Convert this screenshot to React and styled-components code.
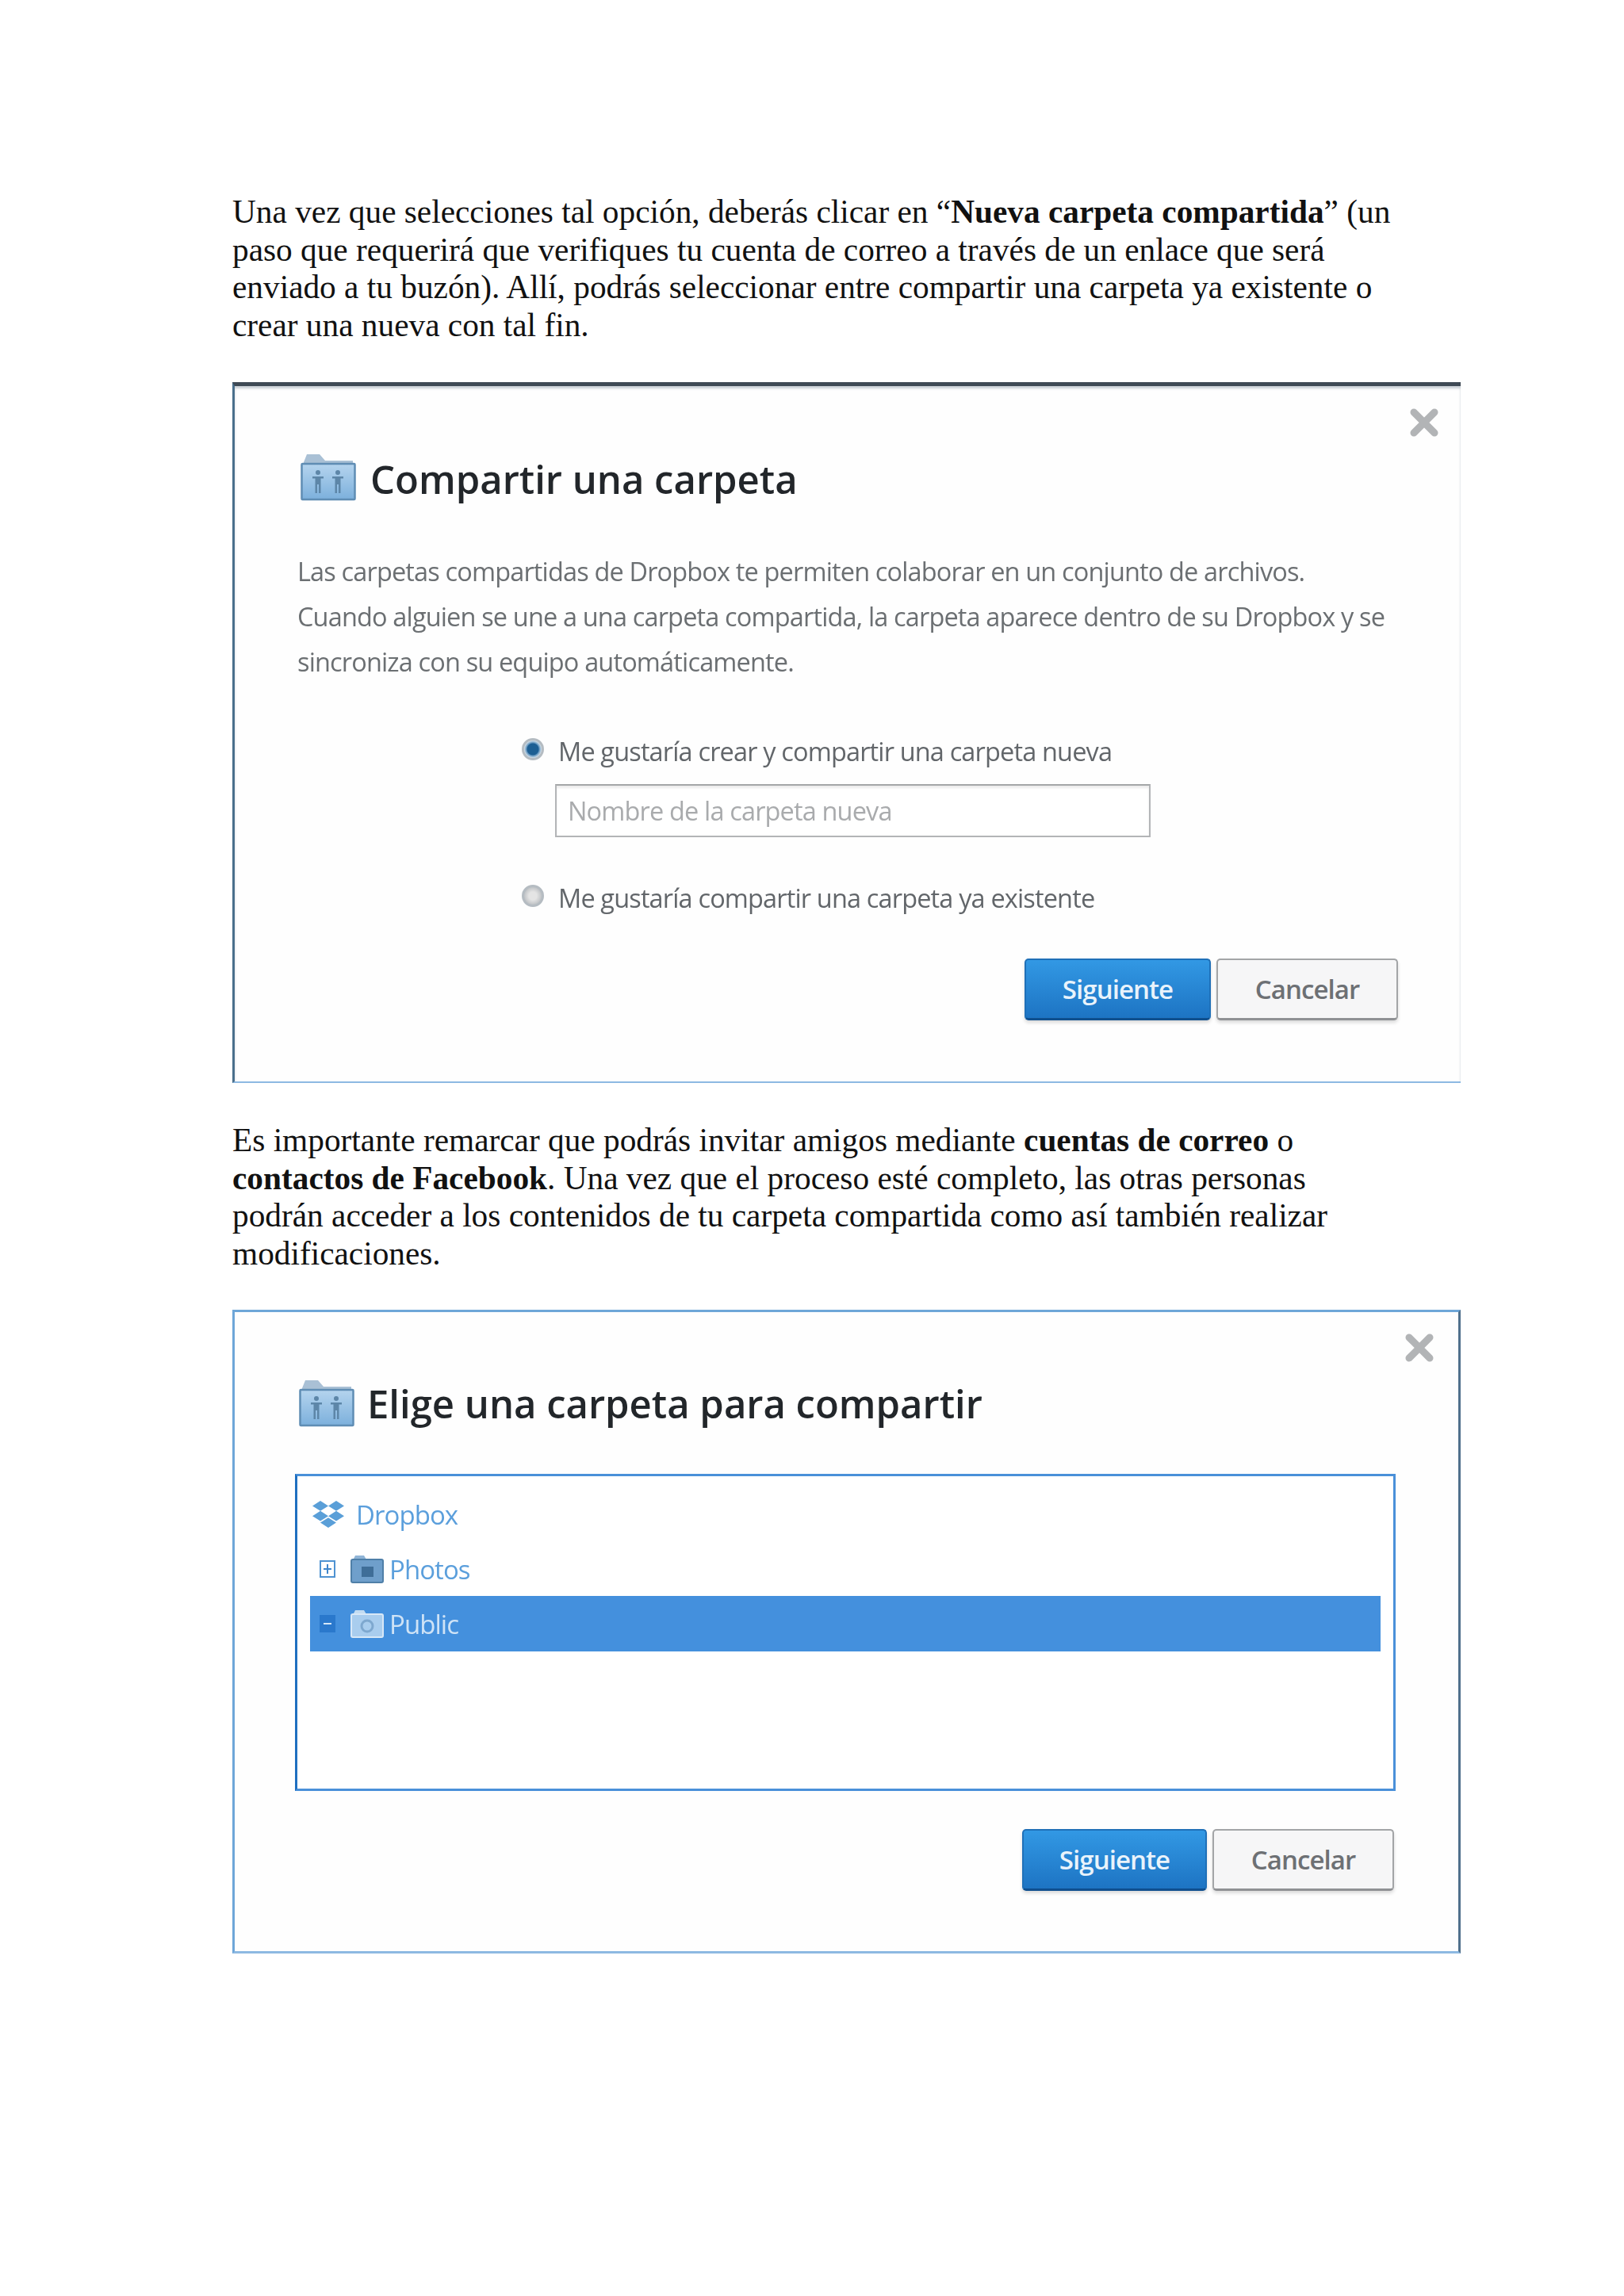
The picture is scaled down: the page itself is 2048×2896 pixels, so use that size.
import React from 'react';
import styled, { createGlobalStyle } from 'styled-components';
import { FaDropbox } from 'react-icons/fa';

const Global = createGlobalStyle`
  html, body { margin: 0; padding: 0; background: #fff; }
`;

const Page = styled.main`
  width: 2048px;
  min-height: 2896px;
  box-sizing: border-box;
  padding: 244px 206px 0 293px;
  background: #fff;
`;

const Para = styled.p`
  margin: 0 0 ${p => p.$after}px;
  font-family: "Liberation Serif", "Times New Roman", serif;
  font-size: 41.32px;
  line-height: 47.5px;
  color: #111;
  white-space: nowrap;
`;

const Dialog = styled.section`
  position: relative;
  box-sizing: border-box;
  width: 1549px;
  height: ${p => p.$height}px;
  margin-bottom: ${p => p.$after}px;
  background: #fefefe;
  font-family: "Open Sans", "Noto Sans", sans-serif;
  border-style: solid;
  border-color: ${p => p.$framed ? '#6ea6d8' : '#3f4a55'} ${p => p.$framed ? '#50708c' : 'transparent'} #8db9e2 ${p => p.$framed ? '#6ea6d8' : '#4a6f8c'};
  border-width: ${p => p.$framed ? '3px 3px 3px 3px' : '5px 0 2px 3px'};
  box-shadow: ${p => p.$framed ? 'none' : 'inset 0 3px 3px rgba(70, 90, 110, 0.28)'};
  padding: 85px ${p => p.$framed ? 79 : 78}px 0 ${p => p.$framed ? 76 : 79}px;
`;

const Close = styled.svg`
  position: absolute;
  top: ${p => p.$top}px;
  right: ${p => p.$right}px;
  width: 42px;
  height: 42px;
`;

const TitleRow = styled.header`
  display: flex;
  align-items: center;
  gap: ${p => p.$gap}px;
  height: 60px;
  margin-left: ${p => p.$shift}px;
`;

const Title = styled.h2`
  margin: 0;
  padding-top: ${p => p.$drop || 0}px;
  font-size: 49px;
  font-weight: 600;
  color: #22262a;
  white-space: nowrap;
  filter: blur(0.5px);
`;

const Lead = styled.p`
  margin: 60px 0 0;
  font-size: 32.5px;
  line-height: 57px;
  letter-spacing: -0.85px;
  color: #6b6f72;
  white-space: nowrap;
  filter: blur(0.5px);
`;

const Options = styled.div`
  margin: 64px 0 0 283px;
  display: flex;
  flex-direction: column;
`;

const Option = styled.label`
  display: flex;
  align-items: center;
  gap: 18px;
  height: 40px;
  font-size: 32.5px;
  letter-spacing: -0.85px;
  color: #62666a;
  white-space: nowrap;
  margin-top: ${p => p.$top || 0}px;
  filter: blur(0.5px);
`;

const Radio = styled.span`
  display: block;
  flex: none;
  box-sizing: border-box;
  width: 28px;
  height: 28px;
  margin-bottom: 5px;
  border-radius: 50%;
  border: 3px solid #b5bcc2;
  background: ${p => p.$on
    ? 'radial-gradient(circle, #1d5f93 0 7px, #5f93bd 8px, #d7e3ec 11px)'
    : 'radial-gradient(circle, #e4e4e4 0 5px, #c0c3c6 11px)'};
`;

const Field = styled.div`
  box-sizing: border-box;
  width: 751px;
  height: 67px;
  margin: 22px 0 0 42px;
  padding-left: 14px;
  display: flex;
  align-items: center;
  background: #fff;
  border: 2px solid #b3b5b7;
  border-top-color: #a4a6a8;
  box-shadow: inset 0 3px 3px #ececec;
  font-size: 32.5px;
  letter-spacing: -0.85px;
  color: #a9abad;
  filter: blur(0.4px);
`;

const Actions = styled.div`
  display: flex;
  justify-content: flex-end;
  gap: 7px;
  margin-top: ${p => p.$top}px;
  margin-right: ${p => p.$inset}px;
`;

const Button = styled.button`
  box-sizing: border-box;
  width: ${p => p.$width}px;
  height: 78px;
  padding: 0;
  border-radius: 5px;
  font-family: "Open Sans", "Noto Sans", sans-serif;
  font-size: 33px;
  font-weight: 600;
  letter-spacing: -0.95px;
  border: 2px solid ${p => p.$primary ? '#1f70b8' : '#a3a5a7'};
  border-bottom: 3px solid ${p => p.$primary ? '#0f4f8e' : '#8f9194'};
  color: ${p => p.$primary ? '#e9f3fb' : '#6d7074'};
  background: ${p => p.$primary ? 'linear-gradient(#3298e4, #1d74c3)' : '#f6f6f7'};
  box-shadow: 0 3px 4px rgba(0, 0, 0, 0.14);
`;

const Tree = styled.div`
  box-sizing: border-box;
  height: 400px;
  margin-top: 59px;
  padding: 13px 16px 0;
  background: #fff;
  border: 3px solid #4a90d9;
  border-left-color: #1f6fc0;
`;

const TreeRow = styled.div`
  display: flex;
  align-items: center;
  height: ${p => p.$height}px;
  padding-left: ${p => p.$indent}px;
  background: ${p => p.$selected ? '#4490dd' : 'transparent'};
  font-size: 33px;
  letter-spacing: -0.95px;
  color: ${p => p.$selected ? '#cfe3f6' : '#5b9fdc'};
`;

const DropboxMark = styled(FaDropbox)`
  width: 40px;
  height: 40px;
  margin-right: 15px;
  color: #5a9fd8;
`;

const Toggle = styled.span`
  position: relative;
  box-sizing: border-box;
  width: 20px;
  height: 22px;
  margin-right: 19px;
  border: 2px solid #4f93d2;
  background: ${p => p.$open ? '#2a78cc' : '#fff'};
  border-color: ${p => p.$open ? '#2a78cc' : '#4f93d2'};
  &::before {
    content: '';
    position: absolute;
    left: 3px;
    right: 3px;
    top: 8px;
    height: 2px;
    background: ${p => p.$open ? '#d4e6f7' : '#3f86cc'};
  }
  &::after {
    content: '';
    display: ${p => p.$open ? 'none' : 'block'};
    position: absolute;
    top: 3px;
    bottom: 3px;
    left: 7px;
    width: 2px;
    background: #3f86cc;
  }
`;

const RowLabel = styled.span`
  filter: blur(0.4px);
`;

const SharedFolder = () => (
  <svg width="70" height="60" viewBox="0 0 70 60" style={{ flex: 'none' }}>
    <defs>
      <linearGradient id="sf" x1="0" y1="0" x2="0" y2="1">
        <stop offset="0" stopColor="#b5d4ee" />
        <stop offset="1" stopColor="#7cb0dc" />
      </linearGradient>
    </defs>
    <path d="M4 11 L8 1 H24 L31 9 H66 V16 H4 Z" fill="#a9c0d5" />
    <rect x="1.5" y="13" width="67" height="45" rx="1" fill="url(#sf)" stroke="#5f8db4" strokeWidth="2.5" />
    <g fill="#5d86a8">
      <circle cx="22" cy="24" r="3" />
      <path d="M15 29 H29 V31.5 H25.5 V50 H23 V39 H21 V50 H18.5 V31.5 H15 Z" />
      <circle cx="47" cy="24" r="3" />
      <path d="M40 29 H54 V31.5 H50.5 V50 H48 V39 H46 V50 H43.5 V31.5 H40 Z" />
    </g>
  </svg>
);

const SmallFolder = ({ light, round }) => (
  <svg width="42" height="36" viewBox="0 0 42 36" style={{ flex: 'none', marginRight: 7 }}>
    <path d="M3 7 L6 1 H17 L20 6 Z" fill={light ? '#c3dcf2' : '#8fb4d6'} />
    <rect x="1" y="6" width="40" height="29" rx="2" fill={light ? '#a9cdee' : '#6f9fcb'} stroke={light ? '#d8e8f7' : '#4f7fa8'} strokeWidth="2" />
    {round
      ? <circle cx="21" cy="21" r="7" fill="none" stroke="#7ea8cf" strokeWidth="3" />
      : <rect x="14" y="15" width="15" height="13" fill="#3f6e98" />}
  </svg>
);

const CloseIcon = ({ top, right }) => (
  <Close $top={top} $right={right} viewBox="0 0 42 42" aria-label="Cerrar">
    <path d="M8 8 L34 34 M34 8 L8 34" stroke="#b2b4b6" strokeWidth="9" strokeLinecap="round" />
  </Close>
);

export default function App() {
  return (
    <Page>
      <Global />
      <Para $after={48}>
        Una vez que selecciones tal opción, deberás clicar en “<b>Nueva carpeta compartida</b>” (un<br />
        paso que requerirá que verifiques tu cuenta de correo a través de un enlace que será<br />
        enviado a tu buzón). Allí, podrás seleccionar entre compartir una carpeta ya existente o<br />
        crear una nueva con tal fin.
      </Para>

      <Dialog $height={884} $after={49}>
        <CloseIcon top={25} right={25} />
        <TitleRow $shift={4} $gap={18}>
          <SharedFolder />
          <Title $drop={4}>Compartir una carpeta</Title>
        </TitleRow>
        <Lead>
          Las carpetas compartidas de Dropbox te permiten colaborar en un conjunto de archivos.<br />
          Cuando alguien se une a una carpeta compartida, la carpeta aparece dentro de su Dropbox y se<br />
          sincroniza con su equipo automáticamente.
        </Lead>
        <Options>
          <Option><Radio $on />Me gustaría crear y compartir una carpeta nueva</Option>
          <Field>Nombre de la carpeta nueva</Field>
          <Option $top={56}><Radio />Me gustaría compartir una carpeta ya existente</Option>
        </Options>
        <Actions $top={57} $inset={1}>
          <Button $primary $width={235}>Siguiente</Button>
          <Button $width={229}>Cancelar</Button>
        </Actions>
      </Dialog>

      <Para $after={47}>
        Es importante remarcar que podrás invitar amigos mediante <b>cuentas de correo</b> o<br />
        <b>contactos de Facebook</b>. Una vez que el proceso esté completo, las otras personas<br />
        podrán acceder a los contenidos de tu carpeta compartida como así también realizar<br />
        modificaciones.
      </Para>

      <Dialog $framed $height={812} $after={0}>
        <CloseIcon top={24} right={28} />
        <TitleRow $shift={5} $gap={16}>
          <SharedFolder />
          <Title>Elige una carpeta para compartir</Title>
        </TitleRow>
        <Tree>
          <TreeRow $indent={3} $height={70}>
            <DropboxMark />
            <RowLabel>Dropbox</RowLabel>
          </TreeRow>
          <TreeRow $indent={12} $height={68}>
            <Toggle />
            <SmallFolder />
            <RowLabel>Photos</RowLabel>
          </TreeRow>
          <TreeRow $indent={12} $height={70} $selected>
            <Toggle $open />
            <SmallFolder light round />
            <RowLabel>Public</RowLabel>
          </TreeRow>
        </Tree>
        <Actions $top={48} $inset={2}>
          <Button $primary $width={233}>Siguiente</Button>
          <Button $width={229}>Cancelar</Button>
        </Actions>
      </Dialog>
    </Page>
  );
}
